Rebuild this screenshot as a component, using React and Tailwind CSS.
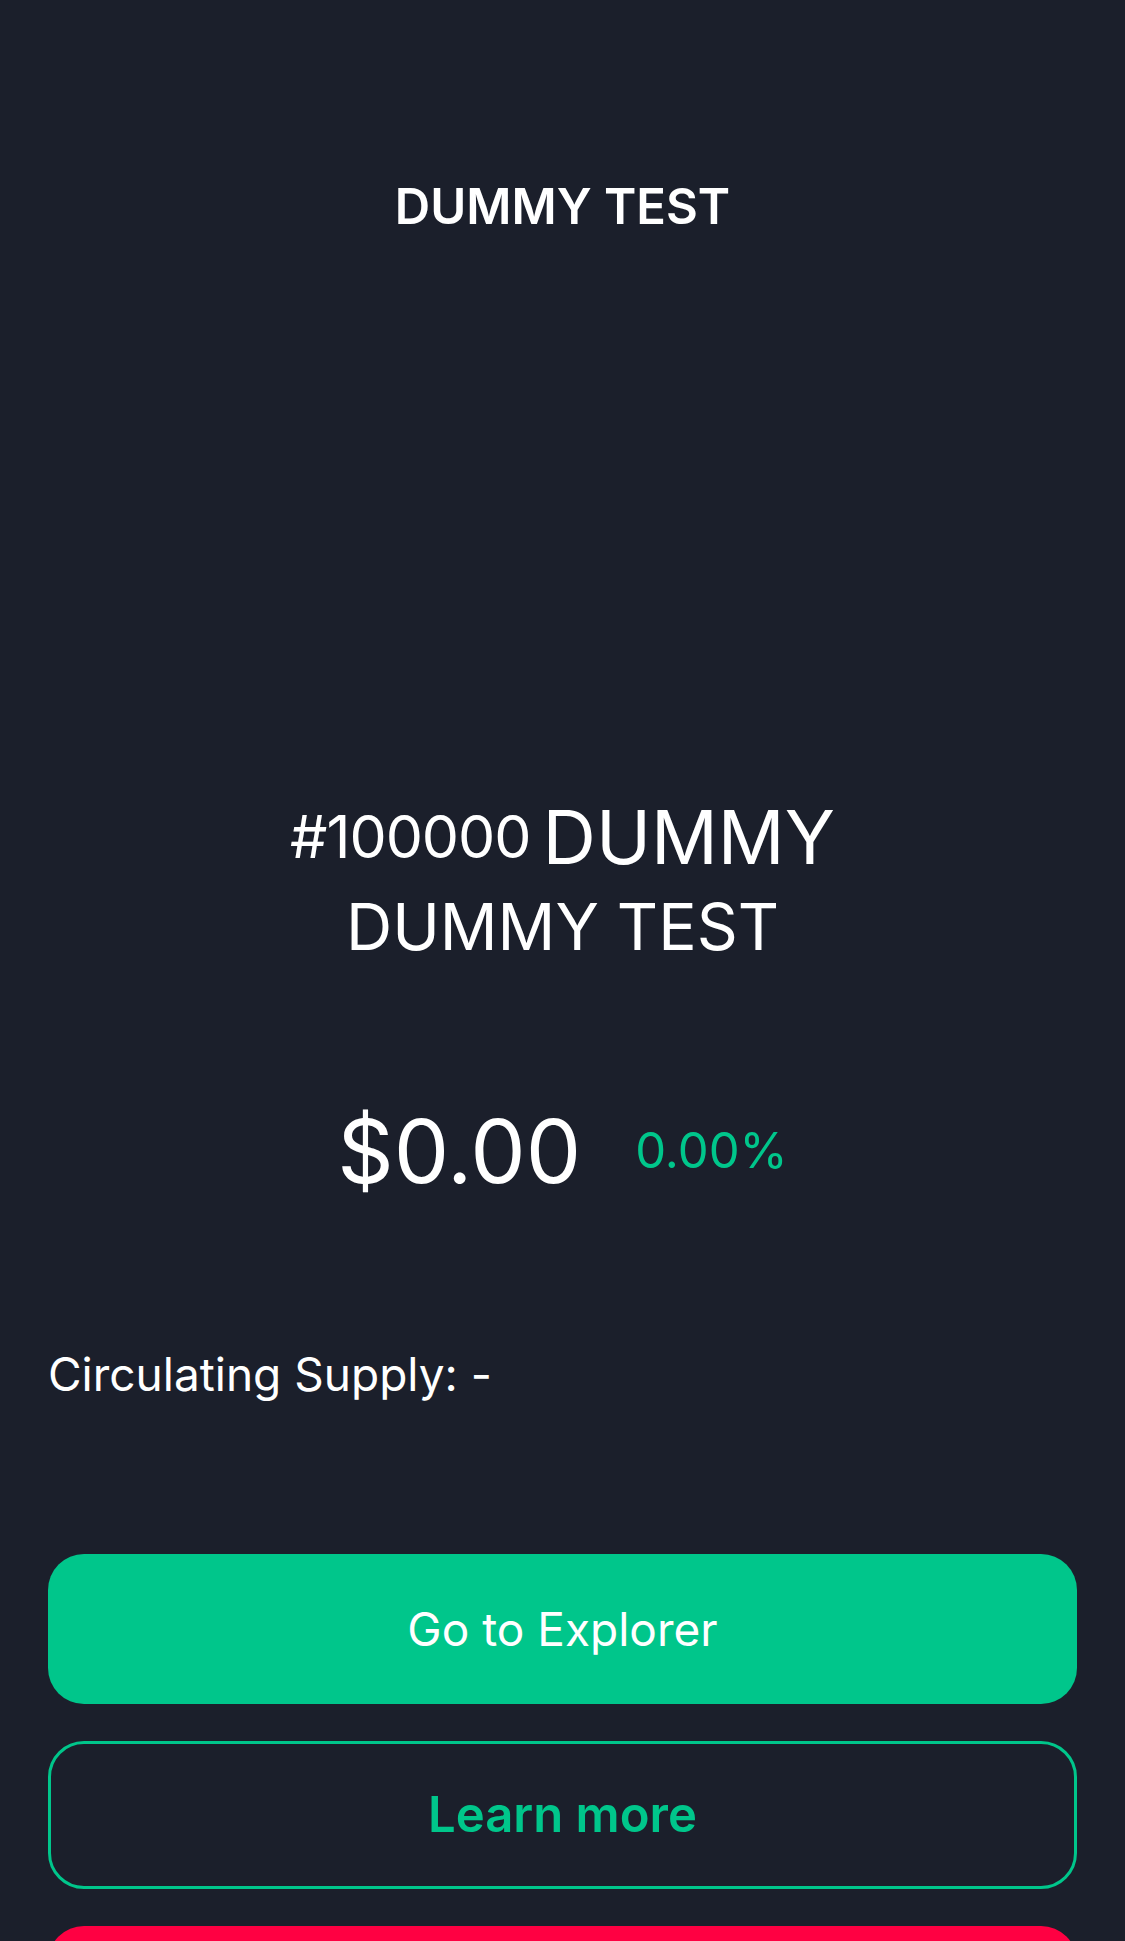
import React from "react";

export default function App() {
  return (
    <div
      className="w-[1125px] h-[1941px] overflow-hidden bg-[#1b1f2b] text-white flex flex-col"
      style={{ fontFamily: "Inter, 'Noto Sans', sans-serif" }}
    >
      <div className="pt-[177px] h-[60px] box-content flex items-center justify-center text-[49px] leading-[60px] font-semibold">
        DUMMY TEST
      </div>

      <div className="mt-[555px] h-[90px] flex items-center justify-center gap-[12px]">
        <span className="text-[59px] leading-[90px] tracking-[-1px]">#100000</span>
        <span className="text-[74px] leading-[90px]">DUMMY</span>
      </div>
      <div className="mt-[5px] h-[80px] flex items-center justify-center text-[64px] leading-[80px]">
        DUMMY TEST
      </div>

      <div className="mt-[129px] h-[110px] flex items-center justify-center gap-[54px]">
        <span className="text-[88px] leading-[110px]">$0.00</span>
        <span className="text-[49px] leading-[110px] text-[#00c68b]">0.00%</span>
      </div>

      <div className="mt-[138px] h-[60px] px-[48px] flex items-center text-[46px] leading-[60px]">
        Circulating Supply: -
      </div>

      <div className="mt-[150px] px-[48px] flex flex-col gap-[37px]">
        <button className="h-[150px] w-full rounded-[36px] bg-[#00c68b] text-white text-[46px] flex items-center justify-center">
          Go to Explorer
        </button>
        <button className="h-[148px] w-full rounded-[36px] border-[3px] border-[#00c68b] text-[#00c68b] text-[49px] font-semibold flex items-center justify-center">
          Learn more
        </button>
        <div className="h-[150px] w-full shrink-0 rounded-[36px] bg-[#ff0042]" />
      </div>
    </div>
  );
}
